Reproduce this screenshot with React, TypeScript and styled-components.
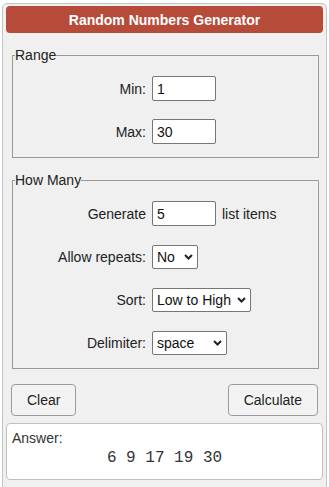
import React from 'react'
import styled, { createGlobalStyle } from 'styled-components'

const GlobalStyle = createGlobalStyle`
  html, body {
    margin: 0;
    padding: 0;
    background: #fff;
  }

  body {
    font-family: 'Liberation Sans', Arial, sans-serif;
    font-size: 14px;
    color: #222;
  }
`

const Panel = styled.div`
  margin: 3px 0 0 2px;
  width: 317px;
  min-height: 500px;
  padding: 2px 3px 0 3px;
  background: #f0f0f0;
  border: 1px solid #c4c4c4;
  border-radius: 5px;
`

const Title = styled.h2`
  margin: 0;
  height: 27px;
  display: flex;
  align-items: center;
  justify-content: center;
  background: #b74b3a;
  border-radius: 4px;
  color: #fff;
  font-size: 14px;
  font-weight: bold;
`

const Group = styled.fieldset<{ $top: number; $bottom: number }>`
  margin: ${p => p.$top}px 4px 0 6px;
  padding: 13px 0 ${p => p.$bottom}px 2px;
  border: 1px solid #9a9a9a;
  min-width: 0;

  legend {
    padding: 0;
    font-size: 14px;
    line-height: 16px;
  }
`

const Form = styled.div<{ $gap: number }>`
  display: grid;
  grid-template-columns: 131px auto;
  column-gap: 6px;
  row-gap: ${p => p.$gap}px;
  align-items: center;
`

const Label = styled.label`
  text-align: right;
`

const Cell = styled.div`
  display: flex;
  align-items: center;
  gap: 6px;
`

const TextInput = styled.input`
  box-sizing: border-box;
  width: 64px;
  height: 25px;
  padding: 0 4px;
  border: 1px solid #767676;
  border-radius: 2px;
  background: #fff;
  font: inherit;
  color: #111;
  outline: none;
`

const SelectWrap = styled.div<{ $w: number }>`
  position: relative;
  width: ${p => p.$w}px;
  height: 24px;

  svg {
    position: absolute;
    right: 5px;
    top: 9px;
    pointer-events: none;
  }
`

const Select = styled.select`
  appearance: none;
  box-sizing: border-box;
  width: 100%;
  height: 100%;
  padding: 0 14px 0 4px;
  border: 1px solid #767676;
  border-radius: 2px;
  background: #fff;
  font: inherit;
  color: #111;
  outline: none;
`

const Buttons = styled.div`
  display: flex;
  justify-content: space-between;
  margin: 15px 5px 0 5px;
`

const Button = styled.button`
  height: 32px;
  padding: 0 15px;
  border: 1px solid #9c9c9c;
  border-radius: 4px;
  background: #f3f3f3;
  font: inherit;
  color: #222;
`

const Answer = styled.div`
  margin-top: 7px;
  height: 57px;
  box-sizing: border-box;
  padding: 6px 5px;
  background: #fff;
  border: 1px solid #c0c0c0;
  border-radius: 4px;
  color: #333;
`

const Numbers = styled.div`
  margin-top: 3px;
  text-align: center;
  font-family: 'Liberation Mono', 'Courier New', monospace;
  font-size: 16px;
  color: #333;
`

const Chevron = () => (
  <svg width="9" height="6" viewBox="0 0 9 6">
    <polyline points="1,1 4.5,4.5 8,1" fill="none" stroke="#222" strokeWidth="2" />
  </svg>
)

const Dropdown = ({ width, value, options }: { width: number; value: string; options: string[] }) => (
  <SelectWrap $w={width}>
    <Select defaultValue={value}>
      {options.map(o => (
        <option key={o}>{o}</option>
      ))}
    </Select>
    <Chevron />
  </SelectWrap>
)

export default function App() {
  return (
    <>
      <GlobalStyle />
      <Panel>
        <Title>Random Numbers Generator</Title>

        <Group $top={14} $bottom={13}>
          <legend>Range</legend>
          <Form $gap={18}>
            <Label>Min:</Label>
            <Cell>
              <TextInput defaultValue="1" />
            </Cell>
            <Label>Max:</Label>
            <Cell>
              <TextInput defaultValue="30" />
            </Cell>
          </Form>
        </Group>

        <Group $top={14} $bottom={13}>
          <legend>How Many</legend>
          <Form $gap={19}>
            <Label>Generate</Label>
            <Cell>
              <TextInput defaultValue="5" />
              list items
            </Cell>
            <Label>Allow repeats:</Label>
            <Cell>
              <Dropdown width={46} value="No" options={['Yes', 'No']} />
            </Cell>
            <Label>Sort:</Label>
            <Cell>
              <Dropdown width={99} value="Low to High" options={['Low to High', 'High to Low', 'None']} />
            </Cell>
            <Label>Delimiter:</Label>
            <Cell>
              <Dropdown width={75} value="space" options={['space', 'comma', 'new line']} />
            </Cell>
          </Form>
        </Group>

        <Buttons>
          <Button>Clear</Button>
          <Button>Calculate</Button>
        </Buttons>

        <Answer>
          Answer:
          <Numbers>6 9 17 19 30</Numbers>
        </Answer>
      </Panel>
    </>
  )
}
